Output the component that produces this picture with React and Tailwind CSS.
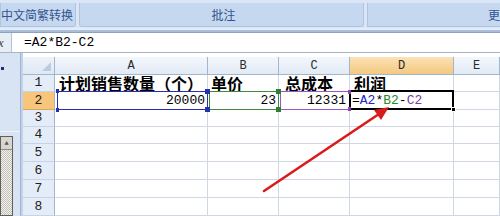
import React from "react";

const cols = [
  { key: "A", w: "w-[153px]" },
  { key: "B", w: "w-[71px]" },
  { key: "C", w: "w-[71px]" },
  { key: "D", w: "w-[104px]" },
  { key: "E", w: "w-[46px]" },
];

const rowHeights = ["h-[17px]", "h-[18px]", "h-[17px]", "h-[17px]", "h-[18px]", "h-[18px]", "h-[18px]", "h-[18px]"];

const Handle = ({ className }) => <div className={`absolute z-20 ${className}`} />;

const Row1 = () => (
  <>
    <div className="w-[153px] border-r border-b border-[#d0d7e5] flex items-center pl-[4px] font-bold text-[16px] leading-[16px] text-black font-['Noto_Sans_CJK_SC',sans-serif] whitespace-nowrap">
      计划销售数量（个）
    </div>
    <div className="w-[71px] border-r border-b border-[#d0d7e5] flex items-center pl-[3px] font-bold text-[16px] leading-[16px] text-black font-['Noto_Sans_CJK_SC',sans-serif]">
      单价
    </div>
    <div className="w-[71px] border-r border-b border-[#d0d7e5] flex items-center pl-[6px] font-bold text-[16px] leading-[16px] text-black font-['Noto_Sans_CJK_SC',sans-serif]">
      总成本
    </div>
    <div className="w-[104px] border-r border-b border-[#d0d7e5] flex items-center pl-[4px] font-bold text-[16px] leading-[16px] text-black font-['Noto_Sans_CJK_SC',sans-serif]">
      利润
    </div>
    <div className="w-[46px] border-r border-b border-[#d0d7e5]" />
  </>
);

const Row2 = () => (
  <>
    <div className="relative w-[153px] border-r border-b border-[#d0d7e5] flex items-center justify-end pr-[2px] text-[13px]">
      <div className="absolute left-[2px] top-[-1px] right-[-1px] bottom-[-1px] border border-[#2b2bb3] z-10" />
      <Handle className="left-[1px] top-[-3px] w-[3px] h-[4px] bg-[#2233aa]" />
      <Handle className="left-[1px] bottom-[-3px] w-[3px] h-[4px] bg-[#2233aa]" />
      <Handle className="right-[-3px] top-[-3px] w-[5px] h-[5px] bg-[#2233aa]" />
      <Handle className="right-[-3px] bottom-[-3px] w-[5px] h-[5px] bg-[#2233aa]" />
      <span className="relative z-0">20000</span>
    </div>
    <div className="relative w-[71px] border-r border-b border-[#d0d7e5] flex items-center justify-end pr-[2px] text-[13px]">
      <div className="absolute left-[1px] top-[-1px] right-[-1px] bottom-[-1px] border border-[#3b8b3b] z-10" />
      <Handle className="right-[-3px] top-[-3px] w-[5px] h-[5px] bg-[#2e7d32]" />
      <Handle className="right-[-3px] bottom-[-3px] w-[5px] h-[5px] bg-[#2e7d32]" />
      <span>23</span>
    </div>
    <div className="relative w-[71px] border-r border-b border-[#d0d7e5] flex items-center justify-end pr-[3px] text-[13px]">
      <div className="absolute left-[1px] top-[-1px] right-[-1px] bottom-[-1px] border border-[#9b55c4] z-10" />
      <Handle className="right-[-2px] top-[-2px] w-[3px] h-[4px] bg-[#8e44ad]" />
      <Handle className="right-[-2px] bottom-[-2px] w-[3px] h-[4px] bg-[#8e44ad]" />
      <span>12331</span>
    </div>
    <div className="relative w-[104px] border-r border-b border-[#d0d7e5] flex items-center pl-[2px] text-[13px]">
      <div className="absolute left-[-1px] top-[-2px] right-[-1px] bottom-[-1px] border-2 border-black z-10" />
      <Handle className="right-[-3px] bottom-[-3px] w-[5px] h-[5px] bg-black border border-white" />
      <span>=</span>
      <span className="text-[#2424c8]">A2</span>
      <span>*</span>
      <span className="text-[#2a8a2a]">B2</span>
      <span>-</span>
      <span className="text-[#7a3fa0]">C2</span>
    </div>
    <div className="w-[46px] border-r border-b border-[#d0d7e5]" />
  </>
);

const EmptyRow = () => (
  <>
    {cols.map((c) => (
      <div key={c.key} className={`${c.w} border-r border-b border-[#d0d7e5]`} />
    ))}
  </>
);

export default function App() {
  return (
    <div className="relative w-[500px] h-[216px] overflow-hidden bg-white flex flex-col font-['Liberation_Mono',monospace] text-black">
      {/* ribbon group labels */}
      <div className="h-[28px] flex bg-[#dae6f5] shrink-0">
        <div className="w-[76px] mt-[3px] h-[24px] bg-[#c6d8ef] border border-t-0 border-[#aec4e0] rounded-br-[3px] flex items-center text-[12px] text-[#32558f] font-['Noto_Sans_CJK_SC',sans-serif] whitespace-nowrap">
          中文简繁转换
        </div>
        <div className="w-[3px]" />
        <div className="w-[285px] mt-[3px] h-[24px] bg-[#c6d8ef] border border-t-0 border-[#aec4e0] rounded-b-[3px] flex items-center justify-center pl-[4px] text-[12px] text-[#32558f] font-['Noto_Sans_CJK_SC',sans-serif]">
          批注
        </div>
        <div className="w-[3px]" />
        <div className="flex-1 mt-[3px] h-[24px] bg-[#c6d8ef] border border-t-0 border-r-0 border-[#aec4e0] flex items-center pl-[120px] text-[12px] text-[#32558f] font-['Noto_Sans_CJK_SC',sans-serif] whitespace-nowrap overflow-hidden">
          更改
        </div>
      </div>
      <div className="h-[2px] bg-[#e3ecf8] shrink-0" />
      <div className="h-[3px] bg-[#a9bedb] border-b border-[#8aa3c6] shrink-0" />

      {/* formula bar */}
      <div className="h-[20px] flex shrink-0 border-b border-[#a7b4c6]">
        <div className="w-[12px] bg-[#e8eef6] border-r border-[#b3c2d6] overflow-hidden flex items-center">
          <span className="ml-[-5px] italic text-[12px] font-['Liberation_Serif',serif] text-[#3c3c3c]">fx</span>
        </div>
        <div className="flex-1 flex items-center pl-[12px] text-[13px]">=A2*B2-C2</div>
      </div>

      {/* sheet area */}
      <div className="flex flex-1 min-h-0">
        {/* left pane */}
        <div className="w-[20px] bg-[#d8e4f3] flex flex-col shrink-0">
          <div className="h-[14px]" />
          <div className="ml-[1px] w-[3px] h-[3px] bg-[#1d2f7a]" />
          <div className="h-[61px]" />
          <div className="h-[1px] bg-[#eef3fa]" />
          <div className="h-[4px]" />
          <div className="w-[13px] flex-1 border border-[#5f5f5f] flex flex-col">
            <div className="h-[13px] bg-[#d9d6cf] border-b border-[#8a8a8a] flex items-center justify-center text-[7px] text-[#555] leading-none">▲</div>
            <div className="flex-1 bg-[repeating-conic-gradient(#c4c0b8_0_25%,#f3f1ec_0_50%)] bg-[length:2px_2px]" />
          </div>
        </div>
        <div className="w-[3px] bg-[#c2d3e8] border-l border-[#9cb3d1] shrink-0" />

        {/* grid */}
        <div className="flex-1 flex flex-col">
          <div className="h-[4px] bg-white" />
          {/* column headers */}
          <div className="flex h-[18px] text-[12px]">
            <div className="w-[32px] relative bg-gradient-to-b from-[#eef3fa] to-[#dfe8f4] border-r border-b border-[#9eb6ce]">
              <div className="absolute right-[3px] bottom-[3px] w-0 h-0 border-l-[9px] border-l-transparent border-b-[9px] border-b-[#bccce0]" />
            </div>
            {cols.map((c) => (
              <div
                key={c.key}
                className={`${c.w} flex items-center justify-center border-r border-b border-[#9eb6ce] ${
                  c.key === "D"
                    ? "bg-gradient-to-b from-[#fbe2b4] to-[#f4c880]"
                    : "bg-gradient-to-b from-[#f4f7fc] to-[#e2eaf5]"
                } text-[#2b2b2b]`}
              >
                {c.key}
              </div>
            ))}
          </div>

          {rowHeights.map((h, i) => (
            <div key={i} className={`flex ${h} text-[13px]`}>
              <div
                className={`w-[32px] flex items-center justify-center border-r border-b ${
                  i === 1 ? "bg-[#f7c67b] border-b-[#d8a760]" : "bg-[#e4ecf7] border-b-[#c5d3e6]"
                } border-r-[#9eb6ce] text-[#222]`}
              >
                {i + 1}
              </div>
              {i === 0 ? <Row1 /> : i === 1 ? <Row2 /> : <EmptyRow />}
            </div>
          ))}
        </div>
      </div>

      {/* red arrow annotation */}
      <svg className="absolute left-0 top-0 z-30 pointer-events-none" width="500" height="216">
        <line x1="264" y1="191" x2="379" y2="114" stroke="#d81c1c" strokeWidth="2.6" strokeLinecap="round" />
        <polygon points="389,107 381,120 374,110" fill="#d81c1c" />
      </svg>
    </div>
  );
}
